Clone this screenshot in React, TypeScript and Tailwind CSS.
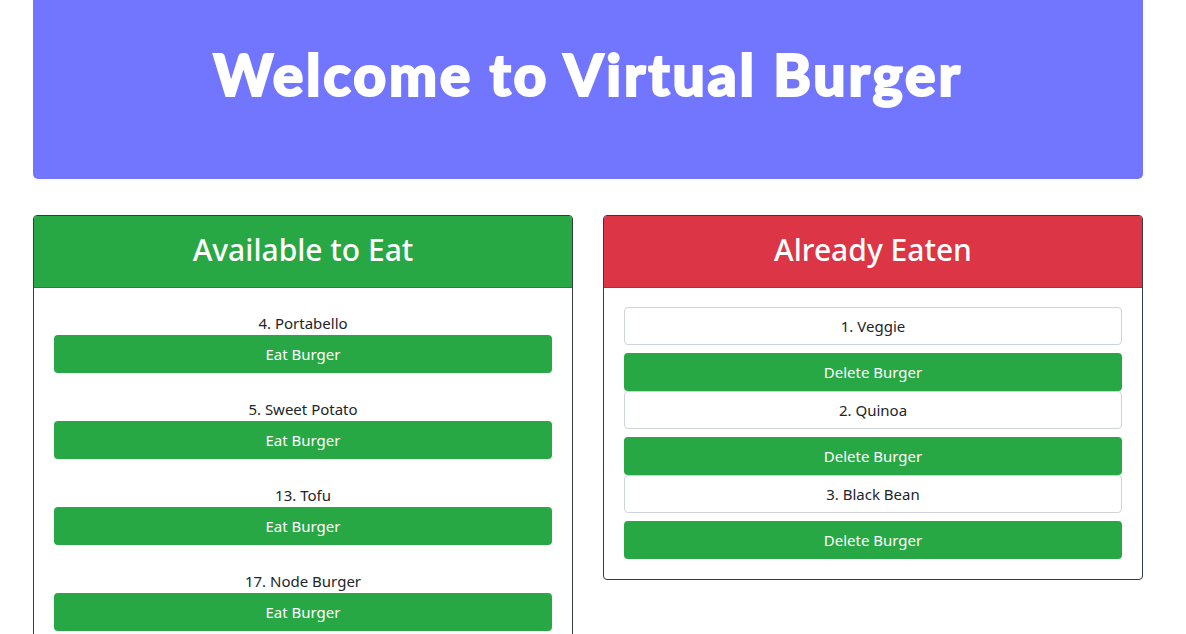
const available = ['4. Portabello', '5. Sweet Potato', '13. Tofu', '17. Node Burger'];
const eaten = ['1. Veggie', '2. Quinoa', '3. Black Bean'];

const bodyFont = "font-['Noto_Sans','Open_Sans',sans-serif]";

export default function App() {
  return (
    <div className={`min-h-screen bg-white text-[#212529] ${bodyFont}`}>
      <div className="mx-auto w-[1110px] -translate-x-[5px]">
        <header className="flex h-[179px] items-center justify-center rounded-b-[5px] bg-[#7276ff]">
          {/* heavy rounded display face is not installed; Lato + stroke gets the weight close */}
          <h1 className="pb-[30px] font-['Lato',sans-serif] text-[57px] font-black tracking-[2.8px] text-white [-webkit-text-stroke:2px_white]">
            Welcome to Virtual Burger
          </h1>
        </header>

        <div className="mt-[36px] grid grid-cols-2 items-start gap-[30px]">
          <section className="overflow-hidden rounded-[4px] border border-[#343a40]">
            <div className="flex h-[72px] items-center justify-center border-b border-black/20 bg-[#28a745]">
              <h2 className="pb-[5px] text-[30px] font-medium text-white">Available to Eat</h2>
            </div>
            <div className="flex flex-col gap-[24px] p-[20px] pt-[23px]">
              {available.map((name) => (
                <div key={name} className="flex flex-col">
                  <p className="h-[24px] text-center text-[15px] leading-[24px]">{name}</p>
                  <button className="h-[38px] rounded-[4px] bg-[#28a745] text-[15px] text-white">
                    Eat Burger
                  </button>
                </div>
              ))}
            </div>
          </section>

          <section className="overflow-hidden rounded-[4px] border border-[#343a40]">
            <div className="flex h-[72px] items-center justify-center border-b border-black/20 bg-[#dc3545]">
              <h2 className="pb-[5px] text-[30px] font-medium text-white">Already Eaten</h2>
            </div>
            <div className="flex flex-col p-[20px] pt-[19px]">
              {eaten.map((name) => (
                <div key={name} className="flex flex-col">
                  <div className="flex h-[38px] items-center justify-center rounded-[4px] border border-[#ced4da] text-[15px]">
                    {name}
                  </div>
                  <button className="mt-[8px] h-[38px] rounded-[4px] bg-[#28a745] text-[15px] text-white">
                    Delete Burger
                  </button>
                </div>
              ))}
            </div>
          </section>
        </div>
      </div>
    </div>
  );
}
